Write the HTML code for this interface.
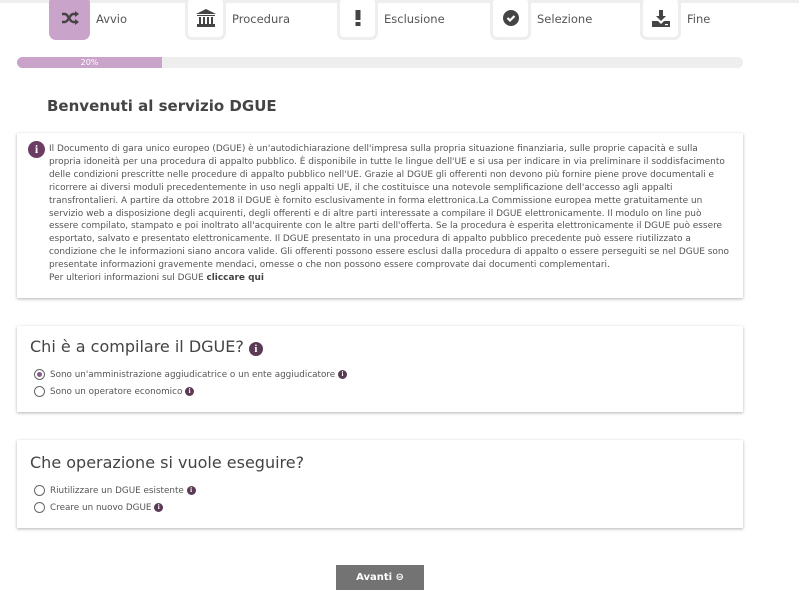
<!DOCTYPE html>
<html><head><meta charset="utf-8"><style>
*{margin:0;padding:0;box-sizing:border-box}
body{width:799px;height:599px;overflow:hidden;background:#fff;font-family:"DejaVu Sans","Liberation Sans",sans-serif;color:#555;position:relative}
.top{position:absolute;left:0;top:0;width:799px;height:3px;background:#eee}
.step{position:absolute;top:-4px;width:41px;height:44px;border:3px solid #eee;border-radius:7px;background:#fff;display:flex;align-items:center;justify-content:center}
.step.on{background:#c9a3c9;border-color:#c9a3c9}
.lbl{position:absolute;top:12px;font-size:11.5px;color:#555}
.bar{position:absolute;left:17px;top:57px;width:726px;height:11px;border-radius:6px;background:#eee;overflow:hidden}
.fill{width:145px;height:11px;background:#c9a3c9;color:#fff;font-size:8px;text-align:center;line-height:11px}
h1{position:absolute;left:47px;top:97px;font-size:15px;font-weight:bold;color:#444}
.box{position:absolute;left:17px;width:726px;background:#fff;box-shadow:0 1px 3px rgba(0,0,0,.3)}
.txt{position:absolute;left:49px;top:143px;font-size:8.95px;line-height:12.9px;color:#555;white-space:nowrap}
.ico{position:absolute;left:28px;top:141px;width:17px;height:17px;border-radius:50%;background:#6b3d63;color:#fff;font:bold 12px "Liberation Serif",serif;text-align:center;line-height:17px}
h2{position:absolute;left:30px;font-size:16px;font-weight:normal;color:#444}
.i{display:inline-block;width:9px;height:9px;border-radius:50%;background:#5a3a55;color:#fff;font:bold 7px "Liberation Serif",serif;text-align:center;line-height:9px;vertical-align:1px}
.i2{width:14px;height:14px;font-size:11px;line-height:14px;vertical-align:0}
.r{position:absolute;left:34px;font-size:8.8px;color:#555;display:flex;align-items:center}
.r b{display:inline-block;width:11px;height:11px;border:1px solid #666;border-radius:50%;margin-right:5px;font-weight:normal;position:relative}
.r b.c:after{content:"";position:absolute;left:2px;top:2px;width:5px;height:5px;border-radius:50%;background:#8a5a8a}
.btn{position:absolute;left:336px;top:565px;width:88px;height:25px;background:#737373;color:#fff;font-size:10px;font-weight:bold;text-align:center;line-height:25px}
</style></head><body>
<div class="top"></div>
<div class="step on" style="left:49px"><svg width="18" height="14" viewBox="0 0 18 14"><path d="M1 3h3c3 0 5 8 8 8h3M1 11h3c3 0 5-8 8-8h3" stroke="#444" stroke-width="2.4" fill="none"/><path d="M14 0l4 3-4 3zM14 8l4 3-4 3z" fill="#444"/></svg></div>
<div class="lbl" style="left:96px">Avvio</div>
<div class="step" style="left:185px"><svg width="20" height="18" viewBox="0 0 20 18"><path d="M10 0L0 5h20z M1 6h18v1H1z M3 8h2v7H3zM7 8h2v7H7zM11 8h2v7h-2zM15 8h2v7h-2z M1 15h18v3H1z" fill="#444"/></svg></div>
<div class="lbl" style="left:232px">Procedura</div>
<div class="step" style="left:337px"><svg width="6" height="16"><rect x="0.5" y="0" width="5" height="10" fill="#444"/><rect x="0.5" y="12" width="5" height="4" fill="#444"/></svg></div>
<div class="lbl" style="left:384px">Esclusione</div>
<div class="step" style="left:490px"><svg width="16" height="16" viewBox="0 0 16 16"><circle cx="8" cy="8" r="8" fill="#444"/><path d="M4.5 8l2.5 2.5 4.5-4.5" stroke="#fff" stroke-width="2.2" fill="none"/></svg></div>
<div class="lbl" style="left:537px">Selezione</div>
<div class="step" style="left:640px"><svg width="18" height="17" viewBox="0 0 18 17"><path d="M7 0h4v6h3l-5 5-5-5h3z M0 11h6l3 3 3-3h6v6H0z" fill="#444"/><rect x="13" y="14" width="3" height="1.2" fill="#fff"/></svg></div>
<div class="lbl" style="left:687px">Fine</div>
<div class="bar"><div class="fill">20%</div></div>
<h1>Benvenuti al servizio DGUE</h1>
<div class="box" style="top:133px;height:165px"></div>
<div class="ico">i</div>
<div class="txt">Il Documento di gara unico europeo (DGUE) è un'autodichiarazione dell'impresa sulla propria situazione finanziaria, sulle proprie capacità e sulla<br>propria idoneità per una procedura di appalto pubblico. È disponibile in tutte le lingue dell'UE e si usa per indicare in via preliminare il soddisfacimento<br>delle condizioni prescritte nelle procedure di appalto pubblico nell'UE. Grazie al DGUE gli offerenti non devono più fornire piene prove documentali e<br>ricorrere ai diversi moduli precedentemente in uso negli appalti UE, il che costituisce una notevole semplificazione dell'accesso agli appalti<br>transfrontalieri. A partire da ottobre 2018 il DGUE è fornito esclusivamente in forma elettronica.La Commissione europea mette gratuitamente un<br>servizio web a disposizione degli acquirenti, degli offerenti e di altre parti interessate a compilare il DGUE elettronicamente. Il modulo on line può<br>essere compilato, stampato e poi inoltrato all'acquirente con le altre parti dell'offerta. Se la procedura è esperita elettronicamente il DGUE può essere<br>esportato, salvato e presentato elettronicamente. Il DGUE presentato in una procedura di appalto pubblico precedente può essere riutilizzato a<br>condizione che le informazioni siano ancora valide. Gli offerenti possono essere esclusi dalla procedura di appalto o essere perseguiti se nel DGUE sono<br>presentate informazioni gravemente mendaci, omesse o che non possono essere comprovate dai documenti complementari.<br>Per ulteriori informazioni sul DGUE <b style="color:#444">cliccare qui</b></div>
<div class="box" style="top:326px;height:86px"></div>
<h2 style="top:337px">Chi è a compilare il DGUE? <span class="i i2">i</span></h2>
<div class="r" style="top:369px"><b class="c"></b>Sono un'amministrazione aggiudicatrice o un ente aggiudicatore&nbsp;<span class="i">i</span></div>
<div class="r" style="top:386px"><b></b>Sono un operatore economico&nbsp;<span class="i">i</span></div>
<div class="box" style="top:440px;height:88px"></div>
<h2 style="top:453px">Che operazione si vuole eseguire?</h2>
<div class="r" style="top:485px"><b></b>Riutilizzare un DGUE esistente&nbsp;<span class="i">i</span></div>
<div class="r" style="top:502px"><b></b>Creare un nuovo DGUE&nbsp;<span class="i">i</span></div>
<div class="btn">Avanti ⊖</div>
</body></html>
